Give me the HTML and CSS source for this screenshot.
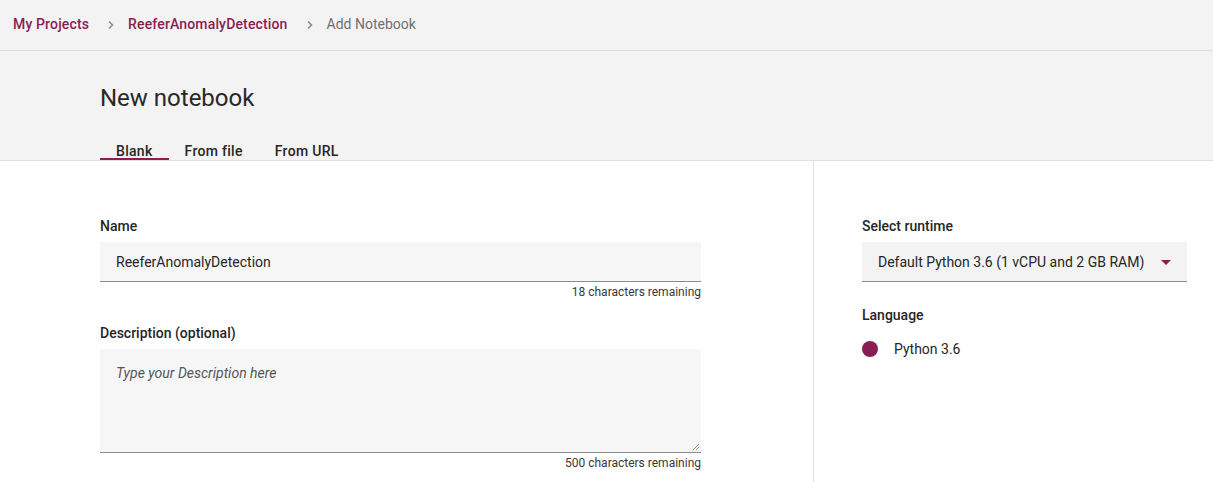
FILE: index.html
```html
<!DOCTYPE html>
<html lang="en">
<head>
<meta charset="utf-8">
<title>Add Notebook</title>
<link rel="stylesheet" href="styles.css">
</head>
<body>
<nav class="crumbs">
  <a class="crumb-link" href="#">My Projects</a>
  <svg class="chev" width="8" height="10" viewBox="0 0 8 10"><path d="M2 1.5 L5.5 5 L2 8.5" fill="none" stroke="#8c8c8c" stroke-width="1.6"/></svg>
  <a class="crumb-link" href="#">ReeferAnomalyDetection</a>
  <svg class="chev" width="8" height="10" viewBox="0 0 8 10"><path d="M2 1.5 L5.5 5 L2 8.5" fill="none" stroke="#8c8c8c" stroke-width="1.6"/></svg>
  <span class="crumb-current">Add Notebook</span>
</nav>
<header class="head">
  <h1 class="title">New notebook</h1>
  <div class="tabs">
    <span class="tab tab-active">Blank</span>
    <span class="tab">From file</span>
    <span class="tab">From URL</span>
  </div>
</header>
<main class="body">
  <section class="left">
    <div class="field">
      <label class="label">Name</label>
      <div class="input">ReeferAnomalyDetection</div>
      <div class="helper">18 characters remaining</div>
    </div>
    <div class="field">
      <label class="label">Description (optional)</label>
      <div class="textarea">
        <span class="placeholder">Type your Description here</span>
        <svg class="grip" width="8" height="8" viewBox="0 0 8 8"><path d="M7 1 L1 7 M7 4 L4 7" stroke="#777" stroke-width="0.8"/></svg>
      </div>
      <div class="helper">500 characters remaining</div>
    </div>
  </section>
  <aside class="right">
    <label class="label">Select runtime</label>
    <div class="select">
      <span>Default Python 3.6 (1 vCPU and 2 GB RAM)</span>
      <svg class="caret" width="10" height="6" viewBox="0 0 10 6"><path d="M0 0 H10 L5 5 Z" fill="#8a1e54"/></svg>
    </div>
    <label class="label lang-label">Language</label>
    <div class="lang">
      <span class="dot"></span>
      <span>Python 3.6</span>
    </div>
  </aside>
</main>
</body>
</html>
```

FILE: styles.css
```css
* { box-sizing: border-box; }
html, body { margin: 0; padding: 0; }
body {
  font-family: Roboto, "Noto Sans", "Liberation Sans", sans-serif;
  color: #171717;
  background: #fff;
  width: 1213px;
  height: 482px;
  overflow: hidden;
}
.crumbs {
  height: 51px;
  background: #f3f3f3;
  border-bottom: 1px solid #dedede;
  display: flex;
  align-items: center;
  padding: 0 0 2px 13px;
  font-size: 14px;
}
.crumb-link {
  color: #8a1e54;
  font-weight: 500;
  letter-spacing: 0.15px;
  text-decoration: none;
}
.chev { margin: 2px 13px 0 18px; }
.crumb-current { color: #6f6f6f; }
.head {
  background: #f3f3f3;
  padding: 0 0 0 100px;
  border-bottom: 1px solid #e0e0e0;
  height: 110px;
  display: flex;
  flex-direction: column;
}
.title {
  margin: 31px 0 0;
  font-size: 24px;
  font-weight: 400;
  line-height: 32px;
  color: #282828;
}
.tabs {
  display: flex;
  margin-top: auto;
}
.tab {
  padding: 0 16px;
  font-size: 14px;
  font-weight: 500;
  letter-spacing: 0.3px;
  line-height: 14px;
  color: #262626;
  border-bottom: 2px solid transparent;
}
.tab-active { border-bottom-color: #8a1e54; }
.body {
  display: flex;
  height: 321px;
}
.left {
  width: 814px;
  padding: 56px 112px 0 100px;
  border-right: 1px solid #e0e0e0;
}
.right {
  padding: 56px 0 0 48px;
  width: 373px;
  display: flex;
  flex-direction: column;
}
.label {
  display: block;
  font-size: 14px;
  font-weight: 500;
  line-height: 18px;
  color: #262626;
  margin-bottom: 7px;
}
.input {
  height: 40px;
  background: #f6f6f6;
  border-bottom: 1px solid #8d8d8d;
  display: flex;
  align-items: center;
  padding: 0 16px;
  font-size: 14px;
  color: #262626;
}
.helper {
  text-align: right;
  font-size: 12px;
  line-height: 16px;
  margin-top: 2px;
  color: #393939;
}
.field + .field { margin-top: 24px; }
.textarea {
  position: relative;
  height: 104px;
  background: #f6f6f6;
  border-bottom: 1px solid #8d8d8d;
  padding: 16px 16px;
  font-size: 14px;
}
.placeholder { font-style: italic; color: #555; }
.grip { position: absolute; right: 1px; bottom: 1px; }
.select {
  height: 40px;
  background: #f3f3f3;
  border-bottom: 1px solid #8d8d8d;
  display: flex;
  align-items: center;
  justify-content: space-between;
  padding: 0 16px;
  font-size: 14px;
  color: #262626;
}
.caret { margin-top: 2px; }
.lang-label { margin-top: 24px; margin-bottom: 17px; }
.lang {
  display: flex;
  align-items: center;
  gap: 16px;
  font-size: 14px;
  color: #262626;
}
.dot {
  width: 16px;
  height: 16px;
  border-radius: 50%;
  background: #8a1e54;
}
```
